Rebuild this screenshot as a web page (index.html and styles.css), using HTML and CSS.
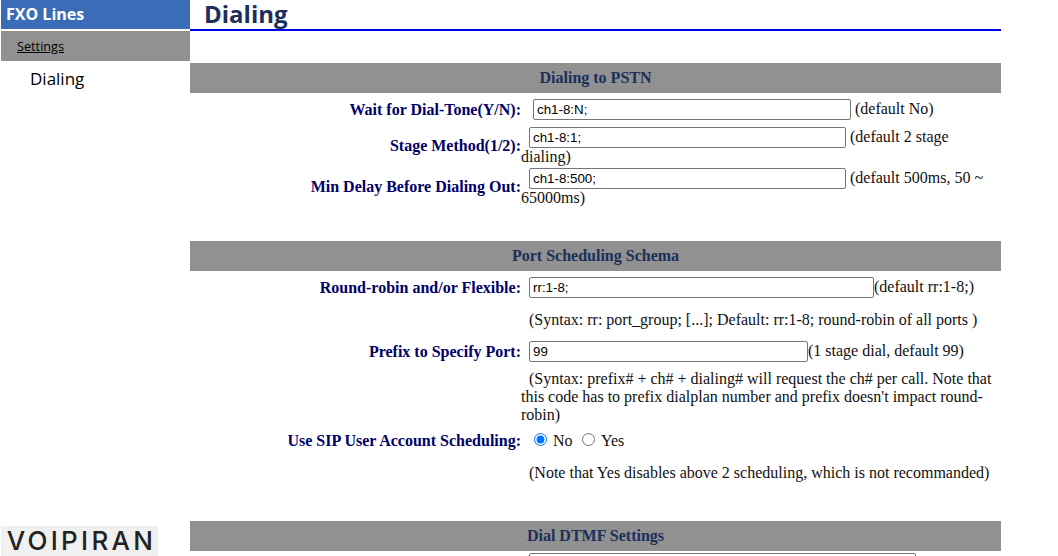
FILE: index.html
```html
<!DOCTYPE html>
<html lang="en">
<head>
<meta charset="utf-8">
<title>Dialing</title>
<link rel="stylesheet" href="styles.css">
</head>
<body>
<div class="page">
  <aside class="sidebar">
    <div class="side-head">FXO Lines</div>
    <div class="side-group"><a href="#">Settings</a></div>
    <div class="side-item">Dialing</div>
    <div class="logo"><span class="logo-text">VOIPIRAN</span></div>
  </aside>
  <main class="main">
    <h1 class="title">Dialing</h1>
    <section class="section sec-pstn">
      <h2 class="bar">Dialing to PSTN</h2>
      <div class="row row-first">
        <label class="label">Wait for Dial-Tone(Y/N):</label>
        <div class="value indent-wide"><input class="field w-320" type="text" value="ch1-8:N;"> (default No)</div>
      </div>
      <div class="row row-second">
        <label class="label label-up">Stage Method(1/2):</label>
        <div class="value"><input class="field w-316" type="text" value="ch1-8:1;"> (default 2 stage dialing)</div>
      </div>
      <div class="row row-third">
        <label class="label label-up">Min Delay Before Dialing Out:</label>
        <div class="value"><input class="field w-316" type="text" value="ch1-8:500;"> (default 500ms, 50 ~ 65000ms)</div>
      </div>
    </section>
    <section class="section sec-port">
      <h2 class="bar">Port Scheduling Schema</h2>
      <div class="row row-first">
        <label class="label">Round-robin and/or Flexible:</label>
        <div class="value"><input class="field w-344" type="text" value="rr:1-8;">(default rr:1-8;)</div>
      </div>
      <div class="note note-first">(Syntax: rr: port_group; [...]; Default: rr:1-8; round-robin of all ports )</div>
      <div class="row row-prefix">
        <label class="label">Prefix to Specify Port:</label>
        <div class="value"><input class="field w-278" type="text" value="99">(1 stage dial, default 99)</div>
      </div>
      <div class="note note-second">(Syntax: prefix# + ch# + dialing# will request the ch# per call. Note that this code has to prefix dialplan number and prefix doesn't impact round-robin)</div>
      <div class="row row-radio">
        <label class="label">Use SIP User Account Scheduling:</label>
        <div class="value"><input class="radio radio-on" type="radio" name="sched" checked> No <input class="radio" type="radio" name="sched"> Yes</div>
      </div>
      <div class="note note-third">(Note that Yes disables above 2 scheduling, which is not recommanded)</div>
    </section>
    <section class="section sec-dtmf">
      <h2 class="bar">Dial DTMF Settings</h2>
      <div class="row row-last">
        <label class="label">&nbsp;</label>
        <div class="value"><input class="field w-387" type="text"></div>
      </div>
    </section>
  </main>
</div>
</body>
</html>
```
FILE: styles.css
```css
html, body {
  margin: 0;
  height: 556px;
  overflow: hidden;
  background: #fff;
}
.page {
  display: flex;
  height: 556px;
  overflow: hidden;
  font-family: "Liberation Serif", serif;
  font-size: 16px;
  line-height: 18px;
  color: #111;
}
.sidebar {
  width: 189px;
  margin-left: 1px;
  flex: none;
  display: flex;
  flex-direction: column;
  font-family: "Open Sans", sans-serif;
}
.side-head {
  height: 29px;
  line-height: 28px;
  padding-left: 5px;
  background: #3b6cb8;
  color: #fff;
  font-weight: 700;
  font-size: 16px;
}
.side-group {
  height: 30px;
  margin-top: 2px;
  line-height: 31px;
  padding-left: 16px;
  background: #919191;
  font-size: 12.7px;
}
.side-group a { color: #000; }
.side-item {
  padding: 6px 0 0 29px;
  font-size: 17px;
  line-height: 24px;
  color: #000;
}
.logo {
  margin-top: auto;
  box-sizing: border-box;
  width: 157px;
  height: 30px;
  padding-left: 4px;
  background: #f0f0f0;
  display: flex;
  align-items: center;
  justify-content: center;
  overflow: hidden;
}
.logo-text {
  font-family: "Inter", sans-serif;
  font-size: 26px;
  font-weight: 500;
  letter-spacing: 3.3px;
  color: #222;
  white-space: nowrap;
}
.main {
  width: 811px;
  flex: none;
}
.title {
  margin: 0;
  height: 29px;
  padding-left: 14px;
  border-bottom: 2px solid #0000e6;
  font-family: "Open Sans", sans-serif;
  font-size: 24px;
  line-height: 27px;
  font-weight: 700;
  color: #1c2f5c;
}
.section { width: 811px; }
.sec-pstn { margin-top: 32px; }
.sec-port { margin-top: 34px; }
.sec-dtmf { margin-top: 39px; }
.bar {
  margin: 0;
  height: 30px;
  line-height: 30px;
  background: #919191;
  text-align: center;
  font-size: 16px;
  font-weight: 700;
  color: #1c2f5c;
}
.row {
  display: flex;
  align-items: center;
}
.row-first { margin-top: 6px; }
.row-second { margin-top: 7px; }
.row-third { margin-top: 2px; }
.row-prefix { margin-top: 12px; }
.row-radio { margin-top: 8px; }
.row-last { margin-top: 2px; }
.label {
  width: 331px;
  flex: none;
  text-align: right;
  font-weight: 700;
  color: #000066;
}
.label-up { padding-bottom: 2px; }
.value {
  width: 475px;
  text-indent: 8px;
}
.indent-wide { text-indent: 12px; }
.field {
  box-sizing: border-box;
  height: 21px;
  margin: 0;
  padding: 1px 3px;
  border: 1px solid #767676;
  border-radius: 2px;
  font-family: "Liberation Sans", sans-serif;
  font-size: 13.33px;
  color: #000;
  text-indent: 0;
}
.w-320 { width: 318px; }
.w-316 { width: 317px; }
.w-344 { width: 345px; }
.w-278 { width: 279px; }
.w-387 { width: 387px; }
.radio {
  margin: 0 3px 0 5px;
  vertical-align: baseline;
}
.radio-on { margin-right: 2px; }
.note {
  margin-left: 331px;
  width: 475px;
  text-indent: 8px;
}
.note-first { margin-top: 13px; }
.note-second { margin-top: 8px; }
.note-third { margin-top: 14px; }
```
